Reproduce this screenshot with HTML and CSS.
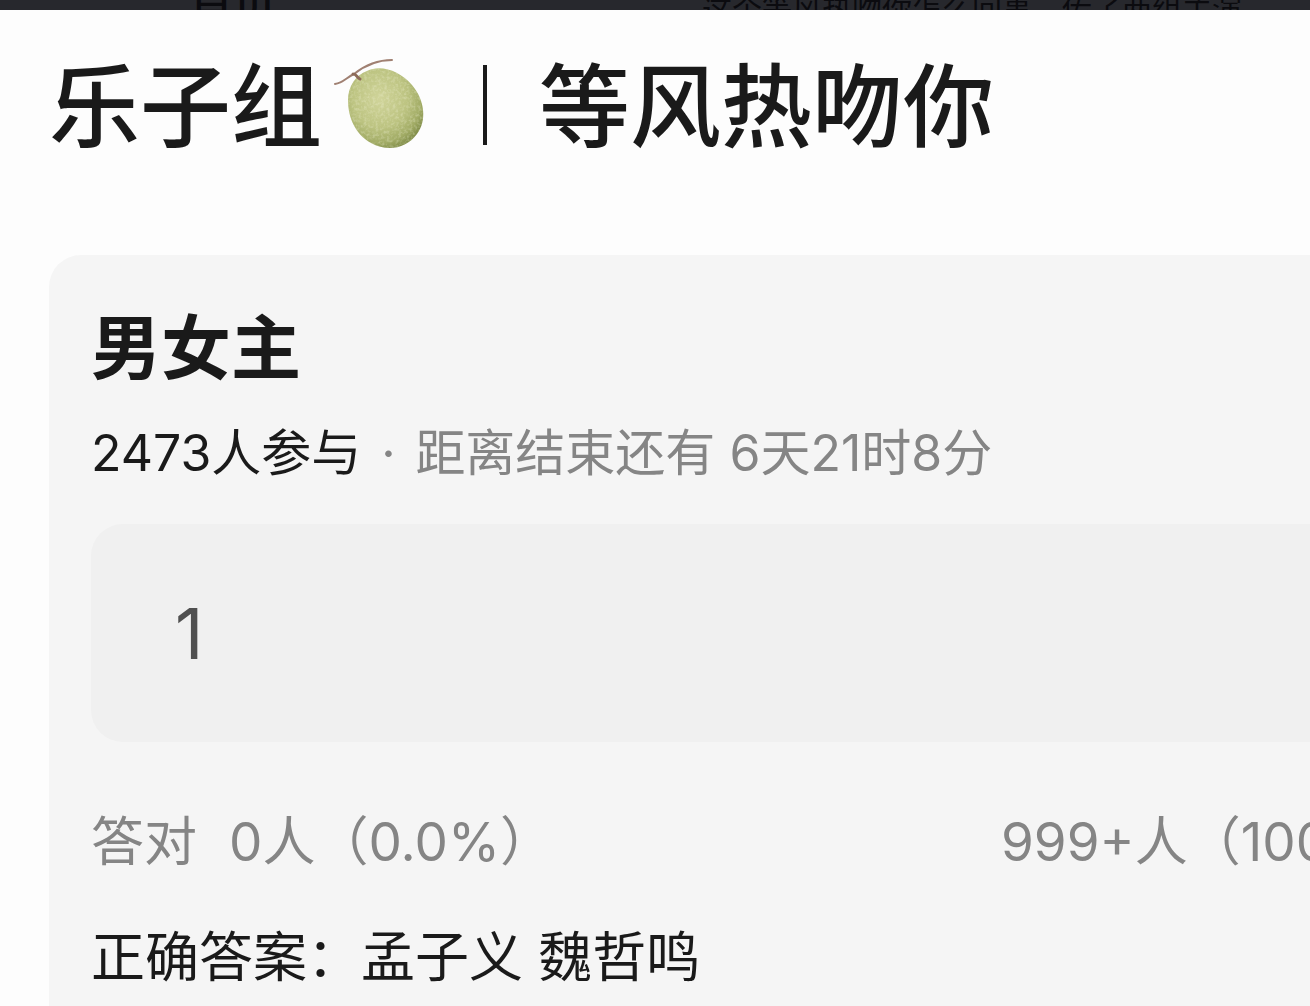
FILE: index.html
```html
<!DOCTYPE html>
<html lang="zh-CN">
<head>
   <meta charset="UTF-8">
   <meta name="viewport" content="width=device-width, initial-scale=1.0">
   <title>乐子组 | 等风热吻你</title>
   <link rel="stylesheet" href="styles.css">
</head>
<body>
   <div class="backdrop">
      <span class="backdrop-tab">首页</span>
      <span class="backdrop-post">这个等风热吻你怎么回事，传了两组主演</span>
   </div>
   <main class="sheet">
      <h1 class="title">
         <span class="title-text">乐子组</span>
         <svg class="melon" viewBox="0 0 96 96" aria-hidden="true">
            <defs>
               <radialGradient id="skin" cx="42%" cy="38%" r="65%">
                  <stop offset="0" stop-color="#d0d49a"/>
                  <stop offset="0.55" stop-color="#bdc482"/>
                  <stop offset="0.85" stop-color="#a2ac66"/>
                  <stop offset="1" stop-color="#84904c"/>
               </radialGradient>
               <filter id="grain">
                  <feTurbulence type="fractalNoise" baseFrequency="0.35" numOctaves="2" seed="4"/>
                  <feColorMatrix values="0 0 0 0 0.94  0 0 0 0 0.95  0 0 0 0 0.76  3 0 0 0 -1.3"/>
                  <feComposite in2="SourceGraphic" operator="in"/>
               </filter>
            </defs>
            <path d="M34 14C48 7 67 14 79 28C92 43 94 64 84 77C73 92 54 95 38 86C22 77 15 60 15 43C15 29 23 18 34 14Z" fill="url(#skin)"/>
            <path d="M34 14C48 7 67 14 79 28C92 43 94 64 84 77C73 92 54 95 38 86C22 77 15 60 15 43C15 29 23 18 34 14Z" filter="url(#grain)" opacity="0.25"/>
            <path d="M2 27C10 26 14 20 21 17C31 9 43 3 59 3" fill="none" stroke="#a08072" stroke-width="2" stroke-linecap="round"/>
            <path d="M20 17C24 17 23 20 27 22" fill="none" stroke="#8d6b58" stroke-width="3" stroke-linecap="round"/>
         </svg>
         <span class="divider"></span>
         <span class="title-text">等风热吻你</span>
      </h1>
      <section class="card">
         <h2 class="question">男女主</h2>
         <p class="meta"><span class="joined">2473人参与</span><span class="dot">·</span><span>距离结束还有 6天21时8分</span></p>
         <button type="button" class="option">1</button>
         <div class="stats">
            <p class="correct"><span>答对</span><span>0人（0.0%）</span></p>
            <p class="total">999+人（100.0%）</p>
         </div>
         <p class="answer">正确答案：孟子义 魏哲鸣</p>
      </section>
   </main>
</body>
</html>
```
FILE: styles.css
```css
* {
   box-sizing: border-box;
}
body {
   margin: 0;
   min-height: 100vh;
   display: flex;
   flex-direction: column;
   overflow: hidden;
   font-family: Inter, "Noto Sans CJK SC", sans-serif;
   background-color: #fdfdfd;
   color: #1a1a1a;
}
h1, h2, p {
   margin: 0;
   white-space: nowrap;
}

/* page left dimmed behind the sheet */
.backdrop {
   display: flex;
   align-items: center;
   height: 10px;
   padding: 8px 0 0 190px;
   overflow: hidden;
   background-color: #27282d;
   color: #0b0b0f;
   white-space: nowrap;
}
.backdrop-tab {
   width: 512px;
   padding-bottom: 12px;
   font-size: 43px;
   line-height: 48px;
   font-weight: 500;
}
.backdrop-post {
   font-size: 30px;
   line-height: 32px;
}

.sheet {
   flex: 1;
   display: flex;
   flex-direction: column;
   padding: 40px 0 0 49px;
}
.title {
   display: flex;
   align-items: center;
   height: 110px;
   margin-bottom: 95px;
   font-size: 91px;
   line-height: 110px;
   font-weight: 500;
}
.title-text {
   padding-top: 4px;
}
.melon {
   width: 96px;
   height: 96px;
   margin-left: 11px;
}
.divider {
   width: 4px;
   height: 80px;
   margin: 0 52px 0 54px;
   background-color: #1a1a1a;
}

.card {
   flex: 1;
   padding: 52px 0 16px 42px;
   border-radius: 32px 0 0 0;
   background-color: #f5f5f5;
}
.question {
   font-size: 70px;
   line-height: 84px;
   font-weight: bold;
}
.meta {
   margin-top: 32px;
   font-size: 50px;
   line-height: 60px;
   color: #858585;
}
.joined {
   color: #1a1a1a;
}
.dot {
   display: inline-block;
   width: 54px;
   text-align: center;
}
.option {
   display: block;
   width: 100%;
   height: 218px;
   margin-top: 41px;
   padding: 0 84px;
   border: none;
   border-radius: 32px 0 0 32px;
   background-color: #f0f0f0;
   color: #505050;
   font-family: inherit;
   font-size: 70px;
   text-align: left;
   cursor: pointer;
}
.stats {
   display: flex;
   justify-content: space-between;
   margin-top: 68px;
   font-size: 53px;
   line-height: 64px;
   color: #858585;
}
.correct {
   display: flex;
   gap: 32px;
}
.total {
   width: 309px;
}
.answer {
   margin-top: 52px;
   font-size: 54px;
   line-height: 64px;
}
```
